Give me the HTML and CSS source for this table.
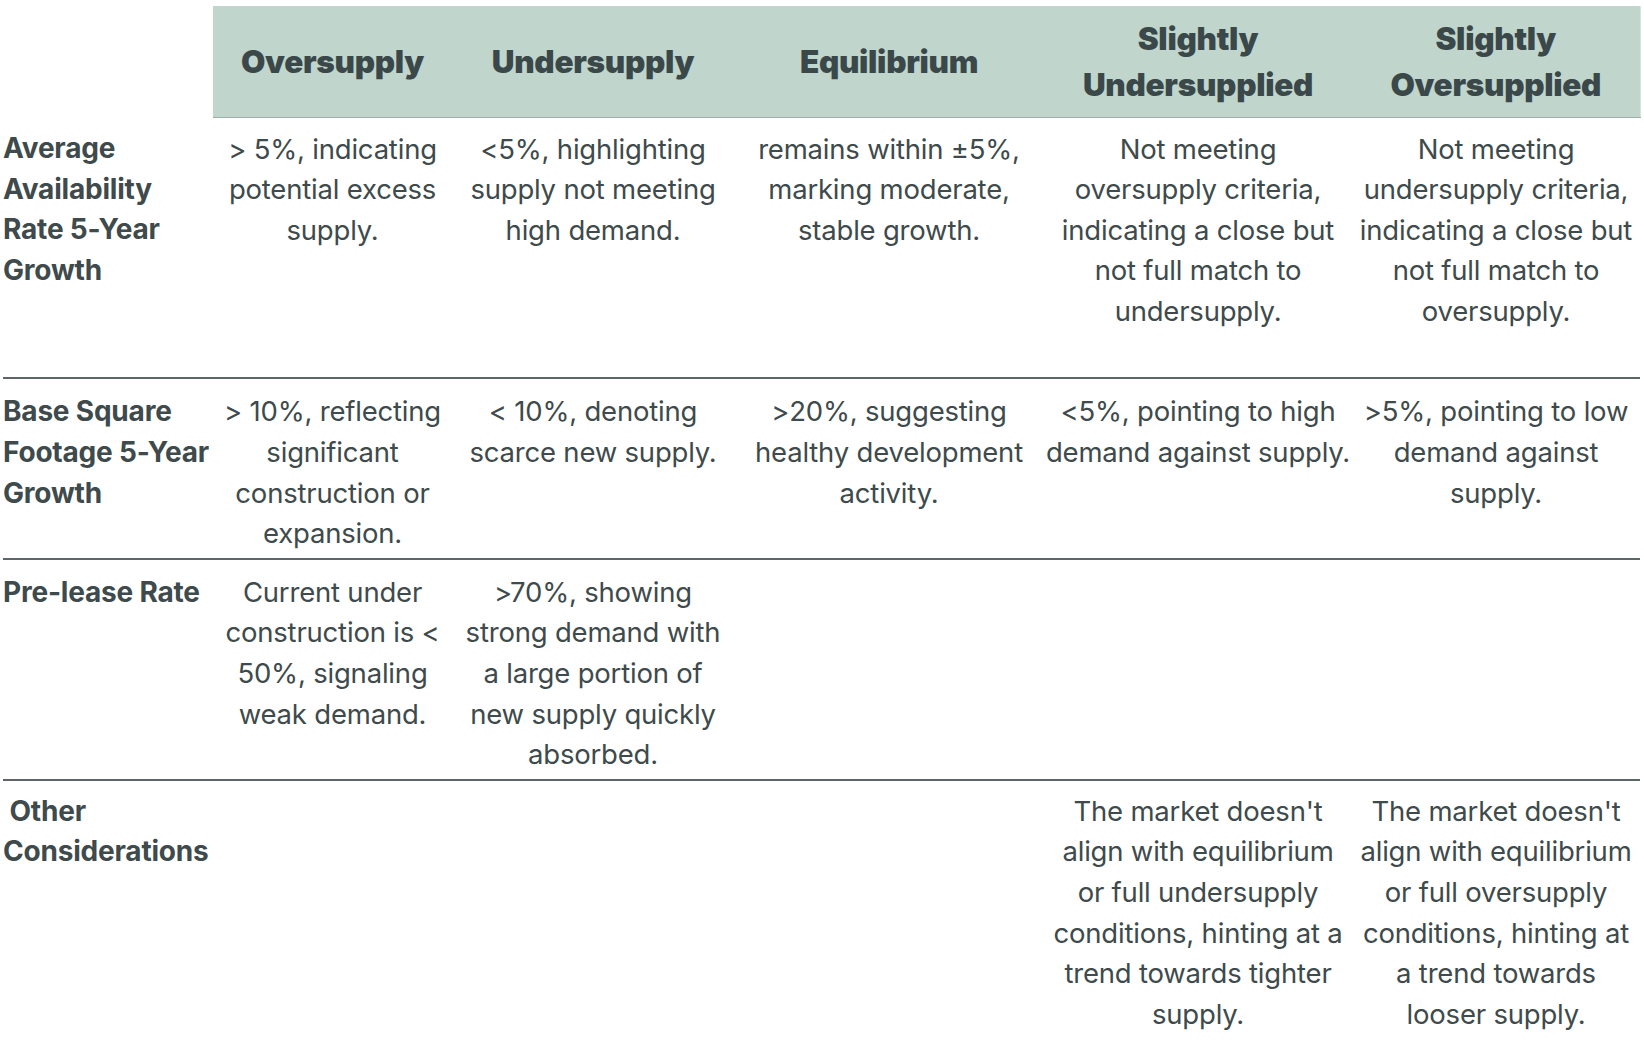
FILE: index.html
```html
<!DOCTYPE html>
<html lang="en">
<head>
<meta charset="utf-8">
<title>Supply conditions</title>
<link rel="stylesheet" href="styles.css">
</head>
<body>
<table class="grid">
  <colgroup>
    <col class="c-label">
    <col class="c1">
    <col class="c2">
    <col class="c3">
    <col class="c4">
    <col class="c5">
  </colgroup>
  <thead>
    <tr>
      <th class="blank"></th>
      <th class="head">Oversupply</th>
      <th class="head">Undersupply</th>
      <th class="head">Equilibrium</th>
      <th class="head">Slightly<br>Undersupplied</th>
      <th class="head last">Slightly<br>Oversupplied</th>
    </tr>
  </thead>
  <tbody>
    <tr class="row first">
      <th class="label">Average<br>Availability<br>Rate 5-Year<br>Growth</th>
      <td>&gt; 5%, indicating<br>potential excess<br>supply.</td>
      <td>&lt;5%, highlighting<br>supply not meeting<br>high demand.</td>
      <td>remains within ±5%,<br>marking moderate,<br>stable growth.</td>
      <td>Not meeting<br>oversupply criteria,<br>indicating a close but<br>not full match to<br>undersupply.</td>
      <td>Not meeting<br>undersupply criteria,<br>indicating a close but<br>not full match to<br>oversupply.</td>
    </tr>
    <tr class="row">
      <th class="label">Base Square<br>Footage 5-Year<br>Growth</th>
      <td>&gt; 10%, reflecting<br>significant<br>construction or<br>expansion.</td>
      <td>&lt; 10%, denoting<br>scarce new supply.</td>
      <td>&gt;20%, suggesting<br>healthy development<br>activity.</td>
      <td>&lt;5%, pointing to high<br>demand against supply.</td>
      <td>&gt;5%, pointing to low<br>demand against<br>supply.</td>
    </tr>
    <tr class="row">
      <th class="label">Pre-lease Rate</th>
      <td>Current under<br>construction is &lt;<br>50%, signaling<br>weak demand.</td>
      <td>&gt;70%, showing<br>strong demand with<br>a large portion of<br>new supply quickly<br>absorbed.</td>
      <td></td>
      <td></td>
      <td></td>
    </tr>
    <tr class="row final">
      <th class="label">&nbsp;Other<br>Considerations</th>
      <td></td>
      <td></td>
      <td></td>
      <td>The market doesn't<br>align with equilibrium<br>or full undersupply<br>conditions, hinting at a<br>trend towards tighter<br>supply.</td>
      <td>The market doesn't<br>align with equilibrium<br>or full oversupply<br>conditions, hinting at<br>a trend towards<br>looser supply.</td>
    </tr>
  </tbody>
</table>
</body>
</html>
```

FILE: styles.css
```css
html, body {
  margin: 0;
  padding: 0;
  background: #ffffff;
}

body {
  font-family: Inter, "Liberation Sans", sans-serif;
  color: #3e4a4b;
}

.grid {
  margin: 6px 0 0 3px;
  width: 1637px;
  table-layout: fixed;
  border-collapse: collapse;
  border-spacing: 0;
}

.c-label { width: 210px; }
.c1 { width: 239px; }
.c2 { width: 282px; }
.c3 { width: 310px; }
.c4 { width: 308px; }
.c5 { width: 288px; }

.blank {
  background: #ffffff;
  padding: 0;
}

.head {
  background: #c0d5cc;
  height: 111px;
  padding: 2px 0 0;
  box-sizing: border-box;
  font-size: 31.5px;
  font-weight: 900;
  line-height: 46px;
  letter-spacing: -0.3px;
  text-align: center;
  vertical-align: middle;
  color: #3b4849;
  white-space: nowrap;
  border-bottom: 1px solid #9cb0a9;
}

.head.last {
  border-right: 1px solid #d9e4df;
}

.row td,
.row .label {
  vertical-align: top;
  padding: 12px 0 4px;
  font-size: 27.5px;
  line-height: 40.6px;
  white-space: nowrap;
}

.row td {
  text-align: center;
  font-weight: 400;
  letter-spacing: -0.2px;
}

.row .label {
  text-align: left;
  font-size: 28px;
  font-weight: 700;
  letter-spacing: -0.2px;
}

.row {
  border-bottom: 2px solid #5d6768;
}

.row.first td,
.row.first .label {
  padding-top: 11px;
  padding-bottom: 46px;
}

.row.final td,
.row.final .label {
  padding-top: 10px;
}

.row.final {
  border-bottom: none;
}
```
